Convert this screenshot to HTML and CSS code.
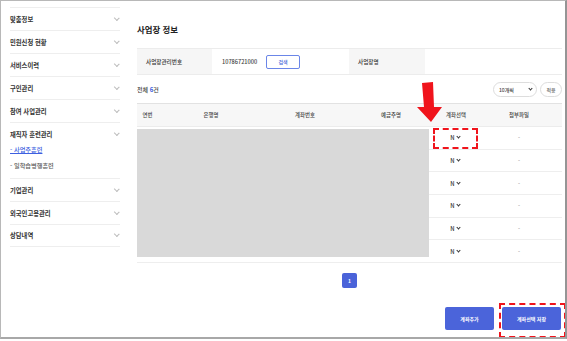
FILE: index.html
```html
<!DOCTYPE html>
<html lang="ko">
  <head>
    <meta charset="utf-8">
    <title>사업장 정보</title>
    <link rel="stylesheet" href="styles.css">
  </head>
  <body>
    <div class="frame">
      <nav class="side">
        <div class="menu">맞춤정보<span class="chev"></span></div>
        <div class="menu">민원신청 현황<span class="chev"></span></div>
        <div class="menu">서비스이력<span class="chev"></span></div>
        <div class="menu">구인관리<span class="chev"></span></div>
        <div class="menu">참여 사업관리<span class="chev"></span></div>
        <div class="group">
          <div class="group-title">재직자 훈련관리<span class="chev"></span></div>
          <a class="sub active" href="#">- 사업주훈련</a>
          <a class="sub" href="#">- 일학습병행훈련</a>
        </div>
        <div class="menu">기업관리<span class="chev"></span></div>
        <div class="menu">외국인고용관리<span class="chev"></span></div>
        <div class="menu last">상담내역<span class="chev"></span></div>
      </nav>

      <main class="content">
        <h2 class="title">사업장 정보</h2>

        <div class="info">
          <div class="label">사업장관리번호</div>
          <div class="value">10786721000 <button class="btn-line">검색</button></div>
          <div class="label">사업장명</div>
          <div class="value"></div>
        </div>

        <div class="toolbar">
          <div class="count">전체 <b>6</b>건</div>
          <div class="tools">
            <div class="pill select">10개씩<span class="caret"></span></div>
            <div class="pill">적용</div>
          </div>
        </div>

        <div class="grid-wrap">
          <table class="grid">
            <colgroup>
              <col style="width:21px">
              <col style="width:106px">
              <col style="width:82px">
              <col style="width:90px">
              <col style="width:40px">
              <col>
            </colgroup>
            <thead>
              <tr>
                <th>연번</th>
                <th>은행명</th>
                <th>계좌번호</th>
                <th>예금주명</th>
                <th>계좌선택</th>
                <th>첨부파일</th>
              </tr>
            </thead>
            <tbody>
              <tr><td></td><td></td><td></td><td></td><td><span class="yn">N<i class="caret"></i></span></td><td class="file">-</td></tr>
              <tr><td></td><td></td><td></td><td></td><td><span class="yn">N<i class="caret"></i></span></td><td class="file">-</td></tr>
              <tr><td></td><td></td><td></td><td></td><td><span class="yn">N<i class="caret"></i></span></td><td class="file">-</td></tr>
              <tr><td></td><td></td><td></td><td></td><td><span class="yn">N<i class="caret"></i></span></td><td class="file">-</td></tr>
              <tr><td></td><td></td><td></td><td></td><td><span class="yn">N<i class="caret"></i></span></td><td class="file">-</td></tr>
              <tr><td></td><td></td><td></td><td></td><td><span class="yn">N<i class="caret"></i></span></td><td class="file">-</td></tr>
            </tbody>
          </table>
          <div class="mask"></div>
        </div>

        <div class="paging"><span class="page on">1</span></div>

        <div class="actions">
          <button class="btn">계좌추가</button>
          <button class="btn wide">계좌선택 저장</button>
        </div>
      </main>

      <!-- annotations drawn over the capture -->
      <svg class="arrow" width="30" height="42" viewBox="0 0 30 42">
        <polygon points="6,1 17,0 18,25 26,25 15,40 1,25 8,25" fill="#f0141c"/>
      </svg>
      <div class="mark mark-yn"></div>
      <div class="mark mark-save"></div>
    </div>
  </body>
</html>
```

FILE: styles.css
```css
* {
  box-sizing: border-box;
}

body {
  margin: 0;
  background: #FFFFFF;
  font-family: "Noto Sans CJK KR", "Noto Sans", sans-serif;
  color: #444444;
}

.frame {
  position: relative;
  display: flex;
  width: 567px;
  height: 339px;
  border: 1px solid #b8b8b8;
  border-right: 2px solid #959595;
  border-bottom: 2px solid #a8a8a8;
  overflow: hidden;
}

/* sidebar */

.side {
  width: 110px;
  margin: 0 17px 0 9px;
  padding-top: 6px;
  flex: none;
}

.menu,
.group-title {
  display: flex;
  align-items: center;
  justify-content: space-between;
  font-size: 6.3px;
  font-weight: 700;
  color: #333333;
}

.menu {
  height: 23px;
  border-top: 1px solid #eeeeee;
}

.menu.last {
  border-bottom: 1px solid #eeeeee;
}

.group {
  border-top: 1px solid #eeeeee;
  padding: 6px 0 7px;
}

.group-title {
  height: 10px;
  margin-bottom: 6px;
}

.sub {
  display: block;
  height: 10px;
  line-height: 10px;
  font-size: 6.2px;
  font-weight: 500;
  color: #5a5a5a;
  text-decoration: none;
}

.sub + .sub {
  margin-top: 6px;
}

.sub.active {
  color: #3d5fe0;
  text-decoration: underline;
}

.chev {
  width: 3.5px;
  height: 3.5px;
  margin: -3px 2px 0 0;
  border-right: 1px solid #bdbdbd;
  border-bottom: 1px solid #bdbdbd;
  transform: rotate(45deg) scaleX(1.1);
}

/* content */

.content {
  width: 425px;
  flex: none;
  padding-top: 22px;
}

.title {
  margin: 0;
  height: 12px;
  line-height: 12px;
  font-size: 8.4px;
  font-weight: 700;
  color: #222222;
}

.info {
  display: grid;
  grid-template-columns: 75px 137px 76px 1fr;
  height: 27px;
  margin-top: 13px;
  border-top: 1px solid #ececec;
  border-bottom: 1px solid #ececec;
  font-size: 5.6px;
  font-weight: 500;
}

.info .label {
  display: flex;
  align-items: center;
  padding-left: 9px;
  background: #f6f6f6;
  color: #333333;
}

.info .value {
  display: flex;
  align-items: center;
  gap: 9px;
  padding-left: 10px;
  color: #444444;
}

.btn-line {
  width: 34px;
  height: 14px;
  padding: 0;
  border: 1px solid #6b86e8;
  border-radius: 2px;
  background: #FFFFFF;
  font-family: inherit;
  font-size: 5px;
  font-weight: 500;
  color: #4a67d8;
}

.toolbar {
  display: flex;
  align-items: center;
  justify-content: space-between;
  height: 15px;
  margin-top: 7px;
}

.count {
  font-size: 6px;
  font-weight: 500;
  color: #444444;
}

.count b {
  color: #3d5fe0;
}

.tools {
  display: flex;
  gap: 3px;
}

.pill {
  display: flex;
  align-items: center;
  justify-content: center;
  height: 15px;
  width: 22px;
  border: 1px solid #dddddd;
  border-radius: 8px;
  font-size: 5px;
  font-weight: 500;
  color: #777777;
}

.pill.select {
  width: 44px;
  justify-content: space-between;
  padding: 0 4px 0 5px;
  color: #444444;
}

.caret {
  display: inline-block;
  width: 3px;
  height: 3px;
  margin: -2px 0 0 2px;
  border-right: 1.2px solid #333333;
  border-bottom: 1.2px solid #333333;
  transform: rotate(45deg);
}

/* table */

.grid-wrap {
  position: relative;
  margin-top: 6px;
}

.grid {
  width: 100%;
  table-layout: fixed;
  border-collapse: collapse;
  border-top: 1px solid #e2e2e2;
}

.grid th {
  height: 23px;
  padding: 0;
  background: #f7f7f7;
  border-bottom: 1px solid #ececec;
  font-size: 5.4px;
  font-weight: 500;
  color: #444444;
  text-align: center;
}

.grid td {
  height: 22.7px;
  padding: 0;
  border-bottom: 1px solid #eeeeee;
  font-size: 5.8px;
  font-weight: 500;
  text-align: center;
  color: #333333;
}

.yn {
  display: inline-flex;
  align-items: center;
  margin-right: 2px;
}

.yn .caret {
  margin-left: 2px;
}

.grid td.file {
  color: #999999;
}

.mask {
  position: absolute;
  left: 0;
  top: 26px;
  width: 292px;
  height: 128px;
  background: #d9d9d9;
}

.paging {
  display: flex;
  justify-content: center;
  margin-top: 10px;
}

.page {
  display: flex;
  align-items: center;
  justify-content: center;
  width: 15px;
  height: 15px;
  border-radius: 2px;
  font-size: 5px;
  font-weight: 700;
}

.page.on {
  background: #4a63d9;
  color: #FFFFFF;
}

.actions {
  display: flex;
  justify-content: flex-end;
  gap: 8px;
  margin-top: 19px;
  padding-right: 1px;
}

.btn {
  width: 49px;
  height: 23px;
  padding: 0;
  border: none;
  border-radius: 2px;
  background: #4b64da;
  font-family: inherit;
  font-size: 5px;
  font-weight: 700;
  color: #FFFFFF;
}

.btn.wide {
  width: 59px;
}

/* annotations */

.arrow {
  position: absolute;
  left: 415px;
  top: 81px;
}

.mark {
  position: absolute;
  border: 2px dashed #f0141c;
}

.mark-yn {
  left: 432px;
  top: 127px;
  width: 45px;
  height: 21px;
}

.mark-save {
  left: 498px;
  top: 302px;
  width: 67px;
  height: 35px;
}
```
